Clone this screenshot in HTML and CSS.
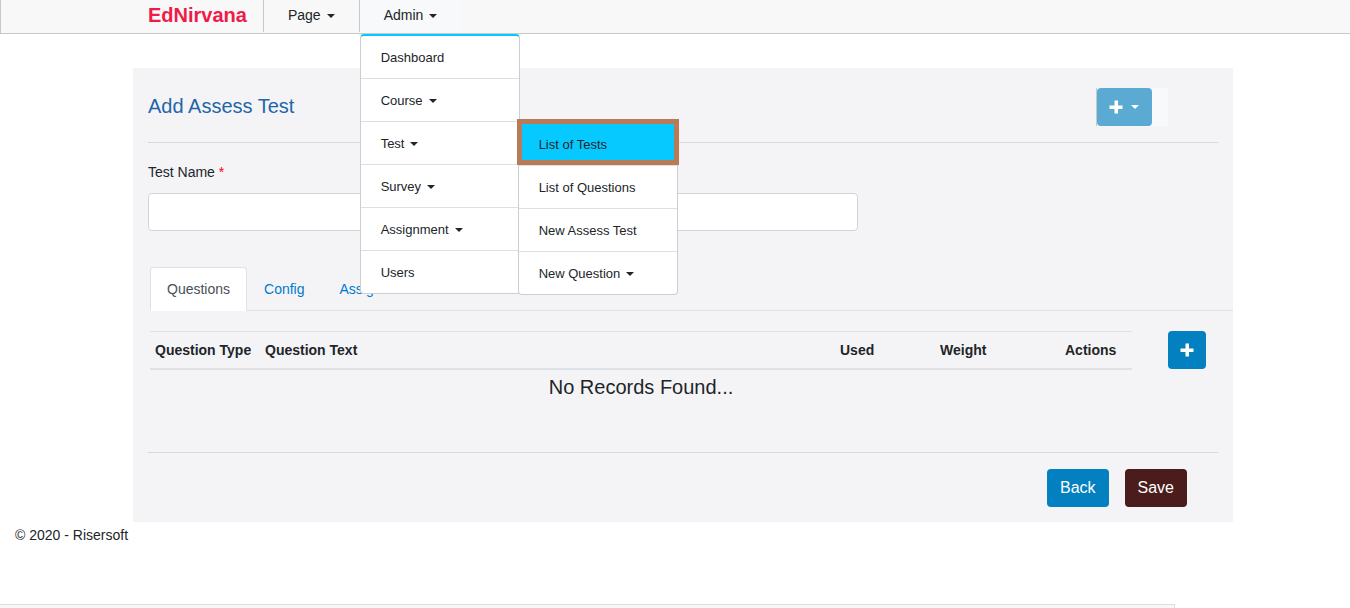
FILE: index.html
```html
<!DOCTYPE html>
<html lang="en">
<head>
<meta charset="utf-8">
<title>Add Assess Test - EdNirvana</title>
<link rel="stylesheet" href="styles.css">
</head>
<body>
<nav class="navbar">
  <a class="brand" href="#">EdNirvana</a>
  <ul class="nav-list">
    <li class="nav-item"><a class="nav-link caret" href="#">Page</a></li>
    <li class="nav-item nav-item-open">
      <a class="nav-link caret" href="#">Admin</a>
      <ul class="menu">
        <li><a class="menu-link" href="#">Dashboard</a></li>
        <li><a class="menu-link caret" href="#">Course</a></li>
        <li class="menu-parent">
          <a class="menu-link caret" href="#">Test</a>
          <ul class="menu submenu">
            <li class="menu-active"><a class="menu-link" href="#">List of Tests</a></li>
            <li><a class="menu-link" href="#">List of Questions</a></li>
            <li><a class="menu-link" href="#">New Assess Test</a></li>
            <li><a class="menu-link caret" href="#">New Question</a></li>
          </ul>
        </li>
        <li><a class="menu-link caret" href="#">Survey</a></li>
        <li><a class="menu-link caret" href="#">Assignment</a></li>
        <li><a class="menu-link" href="#">Users</a></li>
      </ul>
    </li>
  </ul>
</nav>

<main class="panel">
  <header class="panel-header">
    <h1 class="title">Add Assess Test</h1>
    <div class="header-action">
      <button class="btn btn-add-menu caret" type="button" aria-label="Add">
        <svg class="plus" viewBox="0 0 14 14" aria-hidden="true"><path d="M5.5 .5h3.500v5h4.500v3.500h-4.500v4.500h-3.500v-4.500h-5v-3.500h5z"/></svg>
      </button>
    </div>
  </header>

  <div class="field">
    <label class="label" for="test-name">Test Name <span class="required">*</span></label>
    <input class="input" id="test-name" type="text">
  </div>

  <div class="tabs">
    <a class="tab tab-active" href="#">Questions</a>
    <a class="tab" href="#">Config</a>
    <a class="tab" href="#">Assign</a>
  </div>

  <section class="questions">
    <div class="records">
      <table class="table">
        <thead>
          <tr>
            <th class="col-type">Question Type</th>
            <th>Question Text</th>
            <th class="col-used">Used</th>
            <th class="col-weight">Weight</th>
            <th class="col-actions">Actions</th>
          </tr>
        </thead>
      </table>
      <p class="empty">No Records Found...</p>
    </div>
    <button class="btn btn-add" type="button" aria-label="Add question">
      <svg class="plus" viewBox="0 0 14 14" aria-hidden="true"><path d="M5.5 .5h3.500v5h4.500v3.500h-4.500v4.500h-3.500v-4.500h-5v-3.500h5z"/></svg>
    </button>
  </section>

  <div class="panel-footer">
    <button class="btn" type="button">Back</button>
    <button class="btn btn-save" type="submit">Save</button>
  </div>
</main>

<footer class="copyright">© 2020 - Risersoft</footer>
<div class="bottom-bar"></div>
</body>
</html>
```
FILE: styles.css
```css
* {
  box-sizing: border-box;
}

body {
  margin: 0;
  min-height: 100vh;
  display: flex;
  flex-direction: column;
  overflow: hidden;
  background: #fff;
  color: #212529;
  font: 14px/20px "Liberation Sans", Arial, sans-serif;
}

a {
  color: inherit;
  text-decoration: none;
}

ul {
  list-style: none;
  margin: 0;
  padding: 0;
}

.caret::after {
  content: "";
  display: inline-block;
  margin-left: 6px;
  vertical-align: 2px;
  border-top: 4px solid;
  border-left: 4px solid transparent;
  border-right: 4px solid transparent;
}

/* Navigation */
.navbar {
  display: flex;
  height: 34px;
  padding-left: 147px;
  border-left: 1px solid #c8c8c8;
  border-bottom: 1px solid #c8c8c8;
  background: #f8f8f8;
}

.brand {
  padding: 3px 16px 0 0;
  color: #f01c48;
  font-size: 20px;
  line-height: 24px;
  font-weight: bold;
}

.nav-list {
  display: flex;
  height: 32px;
}

.nav-item {
  position: relative;
  border-left: 1px solid #c8c8c8;
}

.nav-item-open {
  width: 101px;
  background: #f8f9fa;
}

.nav-link {
  display: block;
  padding: 5px 24px;
  white-space: nowrap;
}

.nav-item-open > .nav-link {
  padding-right: 0;
}

.menu {
  position: absolute;
  z-index: 10;
  top: 34px;
  left: 0;
  width: 160px;
  background: #fff;
  border: 1px solid #ccced0;
  border-top: 2px solid #06c9ff;
  border-radius: 4px;
  font-size: 13px;
}

.menu > li + li {
  border-top: 1px solid #dfdfe0;
}

.menu-link {
  display: block;
  padding: 12px 20px 10px;
}

.menu-parent {
  position: relative;
}

.submenu {
  top: -1px;
  left: 157px;
}

.menu-active {
  position: relative;
  background: #06c9ff;
}

.menu-active::after {
  content: "";
  position: absolute;
  inset: -4px -2px 0 -2px;
  border: 5px solid #b97a57;
}

/* Panel */
.panel {
  margin: 34px 117px 0 133px;
  padding: 20px 15px 15px;
  background: #f4f4f7;
}

.panel-header {
  display: flex;
  justify-content: space-between;
  align-items: flex-start;
  padding-bottom: 16px;
  border-bottom: 1px solid #d9d9dc;
}

.title {
  margin: 0;
  padding-top: 6px;
  color: #1f66a8;
  font-size: 20px;
  line-height: 24px;
  font-weight: normal;
}

.header-action {
  width: 72px;
  margin-right: 50px;
  border-left: 1px solid #c8c8c8;
  background: #f8f9fb;
}

.btn {
  height: 38px;
  padding: 0 13px;
  border: 0;
  border-radius: 4px;
  background: #0280c0;
  color: #fff;
  font: 16px/24px "Liberation Sans", Arial, sans-serif;
}

.btn-add-menu {
  display: flex;
  align-items: center;
  padding: 0 13px 0 12px;
  gap: 2px;
  background: #5aaad3;
}

.btn-add {
  padding: 0 12px;
}

.plus {
  display: block;
  width: 14px;
  height: 14px;
  fill: #fff;
}

.field {
  padding-top: 19px;
}

.label {
  display: block;
  margin-bottom: 11px;
}

.required {
  color: #f00;
}

.input {
  display: block;
  width: 710px;
  max-width: 100%;
  height: 38px;
  padding: 6px 12px;
  border: 1px solid #ced4da;
  border-radius: 4px;
  background: #fff;
  font: inherit;
}

.tabs {
  display: flex;
  margin: 36px -15px 0 2px;
  border-bottom: 1px solid #dee2e6;
}

.tab {
  margin-bottom: -1px;
  padding: 11px 16px;
  border: 1px solid transparent;
  border-radius: 4px 4px 0 0;
  color: #007acc;
}

.tab + .tab {
  margin-right: 1px;
}

.tab-active {
  border-color: #dee2e6 #dee2e6 #fff;
  background: #fff;
  color: #495057;
}

.questions {
  display: flex;
  align-items: flex-start;
  gap: 36px;
  margin: 20px 12px 0 2px;
}

.records {
  flex: 1;
}

.table {
  width: 100%;
  table-layout: fixed;
  border-collapse: separate;
  border-spacing: 0;
  border-top: 1px solid #dee2e6;
  border-bottom: 2px solid #dee2e6;
}

.table th {
  padding: 8px 5px;
  text-align: left;
  white-space: nowrap;
}

.table .col-type {
  width: 110px;
}

.table .col-used {
  width: 100px;
}

.table .col-weight {
  width: 125px;
}

.table .col-actions {
  width: 72px;
}

.empty {
  margin: 5px 0 0;
  font-size: 20px;
  line-height: 24px;
  text-align: center;
}

.panel-footer {
  display: flex;
  justify-content: flex-end;
  gap: 16px;
  margin-top: 53px;
  padding: 16px 31px 0 0;
  border-top: 1px solid #d9d9dc;
}

.btn-save {
  background: #4b1c1c;
}

.copyright {
  padding: 3px 15px;
}

.bottom-bar {
  height: 4px;
  margin: auto 175px 0 0;
  border-top: 1px solid #dcdcdc;
  border-right: 1px solid #dcdcdc;
  background: #f8f8f8;
}
```
